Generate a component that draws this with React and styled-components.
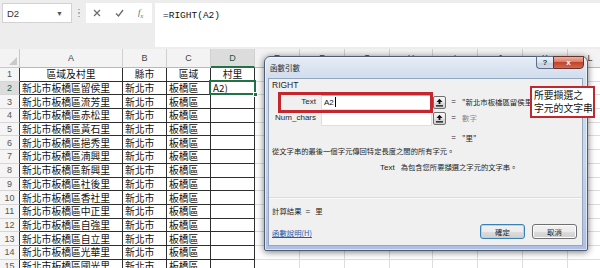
import React from 'react';
import styled, { createGlobalStyle } from 'styled-components';

const CJK = `"Noto Sans CJK TC", "Noto Sans CJK SC", sans-serif`;
const UI = `"Liberation Sans", "Noto Sans CJK TC", sans-serif`;

const GlobalStyle = createGlobalStyle`
  html, body { margin: 0; padding: 0; background: #fff; }
  body { font-family: ${UI}; overflow: hidden; }
  *, *::before, *::after { box-sizing: border-box; }
`;

const Page = styled.div`
  position: relative;
  width: 600px;
  height: 268px;
  overflow: hidden;
  background: #fff;
`;

/* ---------- formula bar ---------- */
const FormulaArea = styled.div`
  height: 49px;
  background: #ededed;
  display: flex;
  align-items: flex-start;
  padding: 3px 0 0 2px;
`;

const NameBox = styled.div`
  width: 70px;
  height: 20px;
  background: #fff;
  border: 1px solid #d2d2d2;
  display: flex;
  align-items: center;
  justify-content: space-between;
  padding: 0 8px 0 4px;
  font: 9.5px ${UI};
  color: #333;
`;

const Caret = styled.span`
  font-size: 7px;
  color: #555;
`;

const Dots = styled.div`
  width: 14px;
  height: 20px;
  display: flex;
  flex-direction: column;
  align-items: center;
  justify-content: center;
  gap: 2px;
  & > i {
    width: 1.5px;
    height: 1.5px;
    background: #a8a8a8;
    border-radius: 50%;
  }
`;

const FxBox = styled.div`
  width: 66px;
  height: 20px;
  background: #fff;
  display: flex;
  align-items: center;
  padding-left: 7px;
  gap: 14px;
  color: #666;
`;

const FxText = styled.span`
  font: italic 9px "Liberation Serif", serif;
  color: #666;
  & sub { font-size: 6px; }
`;

const FormulaInput = styled.div`
  flex: 1;
  margin-left: 3px;
  height: 44px;
  background: #fff;
  padding: 6px 0 0 8px;
  font: 9.5px/14px "Liberation Mono", monospace;
  color: #111;
`;

/* ---------- sheet ---------- */
const Sheet = styled.div`
  display: grid;
  grid-template-columns: 20px 103px 44px 44px 44px 45px 45px 45px 43px 45px 45px 45px 45px;
  grid-template-rows: 19px repeat(15, 13.7px);
`;

const Corner = styled.div`
  position: relative;
  background: #f3f3f3;
  border-right: 1px solid #c8c8c8;
  border-bottom: 1px solid #c8c8c8;
  &::after {
    content: '';
    position: absolute;
    right: 2px;
    bottom: 2px;
    border-style: solid;
    border-width: 0 0 8px 8px;
    border-color: transparent transparent #c9c9c9 transparent;
  }
`;

const ColHead = styled.div`
  display: flex;
  align-items: center;
  justify-content: center;
  background: ${p => (p.$active ? '#dcdcdc' : '#f3f3f3')};
  border-right: 1px solid #d0d0d0;
  border-bottom: ${p => (p.$active ? '2px solid #217346' : '1px solid #b8b8b8')};
  font: 9px ${UI};
  color: ${p => (p.$active ? '#1f5e3a' : '#444')};
`;

const RowHead = styled.div`
  display: flex;
  align-items: center;
  justify-content: center;
  background: ${p => (p.$active ? '#dcdcdc' : '#f5f5f5')};
  border-right: 1px solid #3a3a3a;
  border-bottom: 1px solid #d6d6d6;
  font: 9px ${UI};
  color: ${p => (p.$active ? '#1f5e3a' : '#555')};
`;

const Cell = styled.div`
  position: relative;
  display: flex;
  align-items: center;
  justify-content: ${p => (p.$center ? 'center' : 'flex-start')};
  padding-left: ${p => (p.$center ? 0 : 2)}px;
  border-right: 1px solid ${p => (p.$data ? '#2e2e2e' : '#dcdcdc')};
  border-bottom: 1px solid ${p => (p.$data ? '#2e2e2e' : '#dcdcdc')};
  font: 9.8px/12px ${CJK};
  color: #111;
  white-space: nowrap;

  ${p =>
    p.$selected &&
    `
    &::after {
      content: '';
      position: absolute;
      left: -2px; top: -2px; right: -2px; bottom: -1px;
      border: 2px solid #217346;
    }
    &::before {
      content: '';
      position: absolute;
      right: -4px; bottom: -3px;
      width: 5px; height: 5px;
      background: #217346;
      border: 1px solid #fff;
      z-index: 1;
    }
  `}
`;

/* ---------- dialog ---------- */
const Dialog = styled.div`
  position: absolute;
  left: 264px;
  top: 56px;
  width: 324px;
  height: 195px;
  display: flex;
  flex-direction: column;
  border: 1px solid #4f5d72;
  border-radius: 6px 6px 2px 2px;
  background: linear-gradient(180deg, #e6ecf5 0%, #d3deee 10%, #c6d5eb 55%, #aebfe3 100%);
  box-shadow: 0 1px 7px rgba(0, 0, 0, 0.55), inset 0 0 0 1px rgba(255, 255, 255, 0.55);
`;

const TitleBar = styled.div`
  height: 21px;
  flex: none;
  display: flex;
  align-items: flex-start;
  padding-left: 5px;
`;

const Title = styled.div`
  font: 7.5px/21px ${CJK};
  color: #1b1b1b;
`;

const TitleButtons = styled.div`
  margin-left: auto;
  margin-right: 3px;
  margin-top: -1px;
  display: flex;
`;

const HelpBtn = styled.div`
  width: 17px;
  height: 13px;
  border: 1px solid #5c6d86;
  border-right: none;
  border-radius: 0 0 0 4px;
  background: linear-gradient(180deg, #eef2f8 0%, #d9e2ee 50%, #c4d0e1 50%, #cfdaea 100%);
  display: flex;
  align-items: center;
  justify-content: center;
  font: bold 8px ${UI};
  color: #2b3a50;
`;

const CloseBtn = styled.div`
  width: 31px;
  height: 13px;
  border: 1px solid #6a3128;
  border-radius: 0 0 4px 0;
  background: linear-gradient(180deg, #eab3a6 0%, #d97b66 45%, #c2432b 50%, #cf6a4f 100%);
  display: flex;
  align-items: center;
  justify-content: center;
  font: bold 8px ${UI};
  color: #fff;
`;

const Panel = styled.div`
  position: relative;
  flex: 1;
  margin: 0 4px 4px 3px;
  background: #f0f0f0;
  border: 1px solid #95a6bf;
  display: flex;
  flex-direction: column;
  font: 8px ${UI};
  color: #1e1e1e;
`;

const Upper = styled.div`
  padding-left: 3px;
  display: flex;
  flex-direction: column;
`;

const FuncName = styled.div`
  font: 8.5px/12px ${UI};
`;

const ArgGrid = styled.div`
  margin-top: 3px;
  display: grid;
  grid-template-columns: 49px 111px 14px 15px 1fr;
  grid-template-rows: 16px 16px 20px;
  align-items: center;
`;

const ArgLabel = styled.div`
  text-align: right;
  padding-right: 5px;
  font: 8px/16px ${UI};
`;

const ArgInput = styled.div`
  height: 15px;
  background: #fff;
  border: 1px solid #dbdfe6;
  border-top-color: #abadb3;
  display: flex;
  align-items: center;
  padding-left: 2px;
  font: 8px ${UI};
  color: #111;
`;

const TextCaret = styled.span`
  display: inline-block;
  width: 1px;
  height: 10px;
  margin-left: 1px;
  background: #000;
`;

const RefButton = styled.div`
  margin-left: 1px;
  width: 13px;
  height: 13px;
  border: 1px solid #707070;
  border-radius: 2px;
  background: linear-gradient(180deg, #f6f6f6 0%, #e8e8e8 50%, #dcdcdc 51%, #d2d2d2 100%);
  display: flex;
  align-items: center;
  justify-content: center;
`;

const Eq = styled.div`
  text-align: center;
  font: 8px ${UI};
  align-self: ${p => (p.$end ? 'end' : 'center')};
  line-height: 16px;
`;

const Value = styled.div`
  padding-left: 1px;
  font: 7.4px/16px ${CJK};
  color: ${p => (p.$muted ? '#8e8e8e' : '#1e1e1e')};
  white-space: nowrap;
  align-self: ${p => (p.$end ? 'end' : 'center')};
`;

const Desc = styled.div`
  font: 7.3px/10px ${CJK};
  color: #1e1e1e;
  white-space: nowrap;
  margin-top: ${p => p.$gap || 0}px;
  padding-left: ${p => p.$indent || 0}px;
`;

const ArgName = styled.span`
  font: 8px ${UI};
  margin-right: 6px;
`;

const Footer = styled.div`
  margin-top: auto;
  height: 48px;
  border-top: 1px solid #d9dde2;
  box-shadow: inset 0 1px 0 #fafafa;
  display: grid;
  grid-template-columns: 1fr auto;
  padding: 7px 5px 6px 3px;
`;

const FooterLeft = styled.div`
  display: flex;
  flex-direction: column;
`;

const ResultLine = styled.div`
  font: 7.4px/12px ${CJK};
  color: #1e1e1e;
  & b {
    font-weight: normal;
    margin: 0 5px 0 4px;
    font-family: ${UI};
    font-size: 8px;
  }
`;

const HelpLink = styled.a`
  margin-top: 9px;
  font: 7.4px/12px ${CJK};
  color: #1d5ea8;
  text-decoration: underline;
`;

const ButtonRow = styled.div`
  align-self: end;
  display: flex;
  gap: 7px;
`;

const DlgButton = styled.div`
  width: 45px;
  height: 15px;
  border: 1px solid ${p => (p.$default ? '#3c7fb1' : '#707070')};
  border-radius: 3px;
  background: linear-gradient(180deg, #f2f2f2 0%, #ebebeb 50%, #dddddd 51%, #cfcfcf 100%);
  box-shadow: inset 0 0 0 1px ${p => (p.$default ? '#9fdcf5' : '#fbfbfb')};
  display: flex;
  align-items: center;
  justify-content: center;
  font: 7.4px ${CJK};
  color: #1b1b1b;
`;

const Highlight = styled.div`
  position: absolute;
  left: 9px;
  top: 13px;
  width: 155px;
  height: 21px;
  border: 3px solid #c4262e;
  pointer-events: none;
`;

const Callout = styled.div`
  position: absolute;
  left: 530px;
  top: 86px;
  width: 65px;
  height: 32px;
  background: #fff;
  border: 2px solid #c1272d;
  padding: 1px 0 0 2px;
  font: 9.8px/12.5px ${CJK};
  color: #111;
  white-space: nowrap;
`;

/* ---------- icons ---------- */
const CancelIcon = () => (
  <svg width="8" height="8" viewBox="0 0 8 8">
    <path d="M1 1 L7 7 M7 1 L1 7" stroke="#6a6a6a" strokeWidth="1.2" fill="none" />
  </svg>
);

const CheckIcon = () => (
  <svg width="9" height="8" viewBox="0 0 9 8">
    <path d="M1 4.5 L3.5 7 L8 1" stroke="#6a6a6a" strokeWidth="1.3" fill="none" />
  </svg>
);

const CollapseIcon = () => (
  <svg width="9" height="9" viewBox="0 0 9 9">
    <path d="M4.5 0.8 L1.5 4 L3.6 4 L3.6 6 L5.4 6 L5.4 4 L7.5 4 Z" fill="#111" />
    <rect x="1" y="7.2" width="7" height="1.3" fill="#111" />
  </svg>
);

/* ---------- data ---------- */
const COLS = ['A', 'B', 'C', 'D', 'E', 'F', 'G', 'H', 'I', 'J', 'K', 'L'];
const HEAD = ['區域及村里', '縣市', '區域', '村里'];
const VILLAGES = ['留侯', '流芳', '赤松', '黃石', '挹秀', '湳興', '新興', '社後', '香社', '中正', '自強', '自立', '光華', '國光'];

function rowCells(r) {
  const cells = [];
  COLS.forEach((c, ci) => {
    const data = ci < 4;
    let content = null;
    let center = false;
    if (r === 1 && data) {
      content = HEAD[ci];
      center = true;
    } else if (r > 1 && data) {
      const v = VILLAGES[r - 2];
      if (ci === 0) content = `新北市板橋區${v}里`;
      if (ci === 1) content = '新北市';
      if (ci === 2) content = '板橋區';
      if (ci === 3 && r === 2) content = 'A2)';
    }
    cells.push(
      <Cell key={c + r} $data={data} $center={center} $selected={r === 2 && ci === 3}>
        {content}
      </Cell>
    );
  });
  return cells;
}

export default function App() {
  const rows = [];
  for (let r = 1; r <= 15; r++) {
    rows.push(
      <RowHead key={'h' + r} $active={r === 2}>
        {r}
      </RowHead>
    );
    rows.push(...rowCells(r));
  }

  return (
    <Page>
      <GlobalStyle />
      <FormulaArea>
        <NameBox>
          <span>D2</span>
          <Caret>▼</Caret>
        </NameBox>
        <Dots>
          <i />
          <i />
          <i />
        </Dots>
        <FxBox>
          <CancelIcon />
          <CheckIcon />
          <FxText>
            f<sub>x</sub>
          </FxText>
        </FxBox>
        <FormulaInput>=RIGHT(A2)</FormulaInput>
      </FormulaArea>

      <Sheet>
        <Corner />
        {COLS.map(c => (
          <ColHead key={c} $active={c === 'D'}>
            {c}
          </ColHead>
        ))}
        {rows}
      </Sheet>

      <Dialog>
        <TitleBar>
          <Title>函數引數</Title>
          <TitleButtons>
            <HelpBtn>?</HelpBtn>
            <CloseBtn>x</CloseBtn>
          </TitleButtons>
        </TitleBar>
        <Panel>
          <Upper>
            <FuncName>RIGHT</FuncName>
            <ArgGrid>
              <ArgLabel>Text</ArgLabel>
              <ArgInput>
                A2
                <TextCaret />
              </ArgInput>
              <RefButton>
                <CollapseIcon />
              </RefButton>
              <Eq>=</Eq>
              <Value>"新北市板橋區留侯里"</Value>

              <ArgLabel>Num_chars</ArgLabel>
              <ArgInput />
              <RefButton>
                <CollapseIcon />
              </RefButton>
              <Eq>=</Eq>
              <Value $muted>數字</Value>

              <span />
              <span />
              <span />
              <Eq $end>=</Eq>
              <Value $end>"里"</Value>
            </ArgGrid>
            <Desc>從文字串的最後一個字元傳回特定長度之間的所有字元。</Desc>
            <Desc $gap={6} $indent={108}>
              <ArgName>Text</ArgName>為包含您所要擷選之字元的文字串。
            </Desc>
          </Upper>
          <Footer>
            <FooterLeft>
              <ResultLine>
                計算結果<b>=</b>里
              </ResultLine>
              <HelpLink>函數說明(H)</HelpLink>
            </FooterLeft>
            <ButtonRow>
              <DlgButton $default>確定</DlgButton>
              <DlgButton>取消</DlgButton>
            </ButtonRow>
          </Footer>
          <Highlight />
        </Panel>
      </Dialog>

      <Callout>
        所要擷選之
        <br />
        字元的文字串
      </Callout>
    </Page>
  );
}
